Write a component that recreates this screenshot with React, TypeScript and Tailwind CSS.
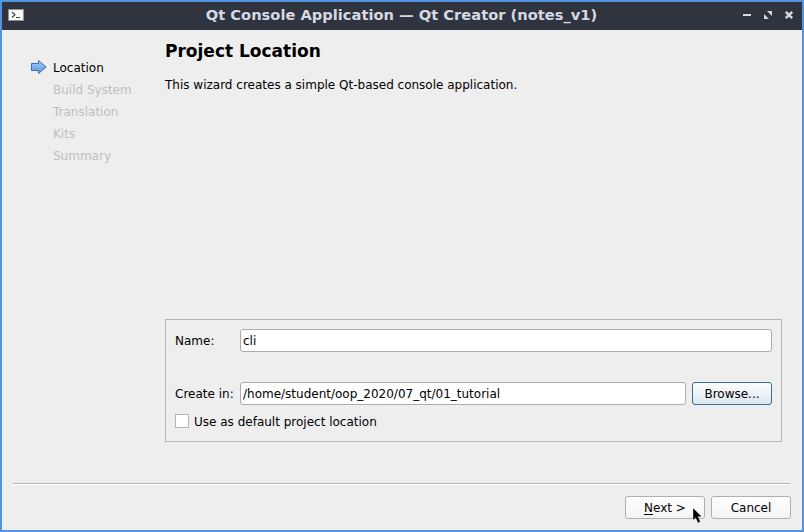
import React from "react";

const pendingSteps = ["Build System", "Translation", "Kits", "Summary"];

function TerminalIcon() {
  return (
    <svg width="16" height="14" viewBox="0 0 16 14" shapeRendering="crispEdges">
      <rect x="0" y="1" width="16" height="12" fill="#8b9099" />
      <rect x="1" y="2" width="14" height="10" fill="#f6f7f7" />
      <path d="M4 4 L7 6.75 L4 9.5" fill="none" stroke="#3b4049" strokeWidth="1.1" shapeRendering="auto" />
      <rect x="8" y="9" width="4" height="1" fill="#3b4049" />
    </svg>
  );
}

function StepArrow() {
  return (
    <svg className="mb-[2px]" width="17" height="16" viewBox="0 0 17 16">
      <defs>
        <linearGradient id="arrow" x1="0" y1="0" x2="0" y2="1">
          <stop offset="0" stopColor="#a0caf8" />
          <stop offset="1" stopColor="#5b9ae8" />
        </linearGradient>
      </defs>
      <path d="M1.5 4.5H8.5V1.5L16.2 8L8.5 14.5V11.5H1.5Z" fill="url(#arrow)" stroke="#466a9c" strokeWidth="1" />
    </svg>
  );
}

function WindowControls() {
  return (
    <svg width="54" height="12" viewBox="0 0 54 12" fill="#d3dae3">
      <rect x="1" y="5" width="8" height="2" />
      <path d="M25 2H30V7ZM22 5V10H27Z" />
      <path d="M43.8 2.8L50.2 9.2M50.2 2.8L43.8 9.2" stroke="#d3dae3" strokeWidth="2.4" />
    </svg>
  );
}

function PointerCursor() {
  return (
    <svg className="absolute left-[691px] top-[506px]" width="9" height="16" viewBox="0 0 9 16">
      <path d="M0.2 0.2V11.8L2.7 9.6L5 14.8L7.1 13.8L4.9 8.6H8.4Z" fill="#000" />
    </svg>
  );
}

const button =
  "flex h-[23px] w-20 items-center justify-center rounded-[3px] border bg-gradient-to-b";
const field =
  "h-[23px] rounded-[3px] border border-[#acacac] bg-white px-[2px] outline-none";

export default function App() {
  return (
    <div className="relative flex h-[532px] w-[804px] flex-col border-2 border-[#5294e2] bg-[#eeeeee] font-['DejaVu_Sans',sans-serif] text-[12px] leading-[14px] text-black">
      <header className="flex h-7 items-center bg-[#2f343f] pb-[2px] pl-[6px] pr-[6px]">
        <TerminalIcon />
        <h1 className="flex-1 pl-[37px] text-center text-[14.67px] font-bold leading-[26px] text-[#d3dae3]">
          Qt Console Application — Qt Creator (notes_v1)
        </h1>
        <WindowControls />
      </header>

      <main className="flex h-[453px]">
        <nav className="w-[163px] shrink-0 pt-[27px]">
          <div className="flex h-[22px] items-center pl-7">
            <StepArrow />
            <span className="pl-[6px]">Location</span>
          </div>
          {pendingSteps.map((step) => (
            <div key={step} className="flex h-[22px] items-center pl-[51px] text-[#bebebe]">
              {step}
            </div>
          ))}
        </nav>

        <section className="flex w-[617px] flex-col pt-[11px]">
          <h2 className="text-[17px] font-bold leading-5">Project Location</h2>
          <p className="mt-[17px]">This wizard creates a simple Qt-based console application.</p>

          <form className="mt-[227px] h-[123px] border border-[#b5b5b5] px-[9px] pt-[9px]">
            <div className="flex items-center">
              <label className="w-[65px]" htmlFor="name">Name:</label>
              <input id="name" className={`${field} w-[532px]`} defaultValue="cli" />
            </div>
            <div className="mt-[30px] flex items-center">
              <label className="w-[65px] whitespace-nowrap" htmlFor="path">Create in:</label>
              <input id="path" className={`${field} w-[446px]`} defaultValue="/home/student/oop_2020/07_qt/01_tutorial" />
              <button type="button" className={`${button} ml-[6px] border-[#386f91] from-[#fdfefe] to-[#dce6ee]`}>
                Browse...
              </button>
            </div>
            <label className="mt-[9px] flex items-start gap-[5px]">
              <input type="checkbox" className="size-[14px] appearance-none border border-[#b4b4b4] bg-white" />
              <span className="pt-px">Use as default project location</span>
            </label>
          </form>
        </section>
      </main>

      <footer className="ml-[11px] mr-[11px] flex flex-col">
        <div className="mr-px h-[2px] border-t border-[#b4b4b4] bg-white" />
        <div className="mt-[11px] flex justify-end gap-[6px]">
          <button type="button" className={`${button} border-[#b0b0b0] from-white to-[#f3f3f3]`}>
            <span className="underline decoration-1 underline-offset-2">N</span>
            <span className="whitespace-pre">ext &gt;</span>
          </button>
          <button type="button" className={`${button} border-[#b0b0b0] from-white to-[#f3f3f3]`}>
            Cancel
          </button>
        </div>
      </footer>
      <PointerCursor />
    </div>
  );
}
